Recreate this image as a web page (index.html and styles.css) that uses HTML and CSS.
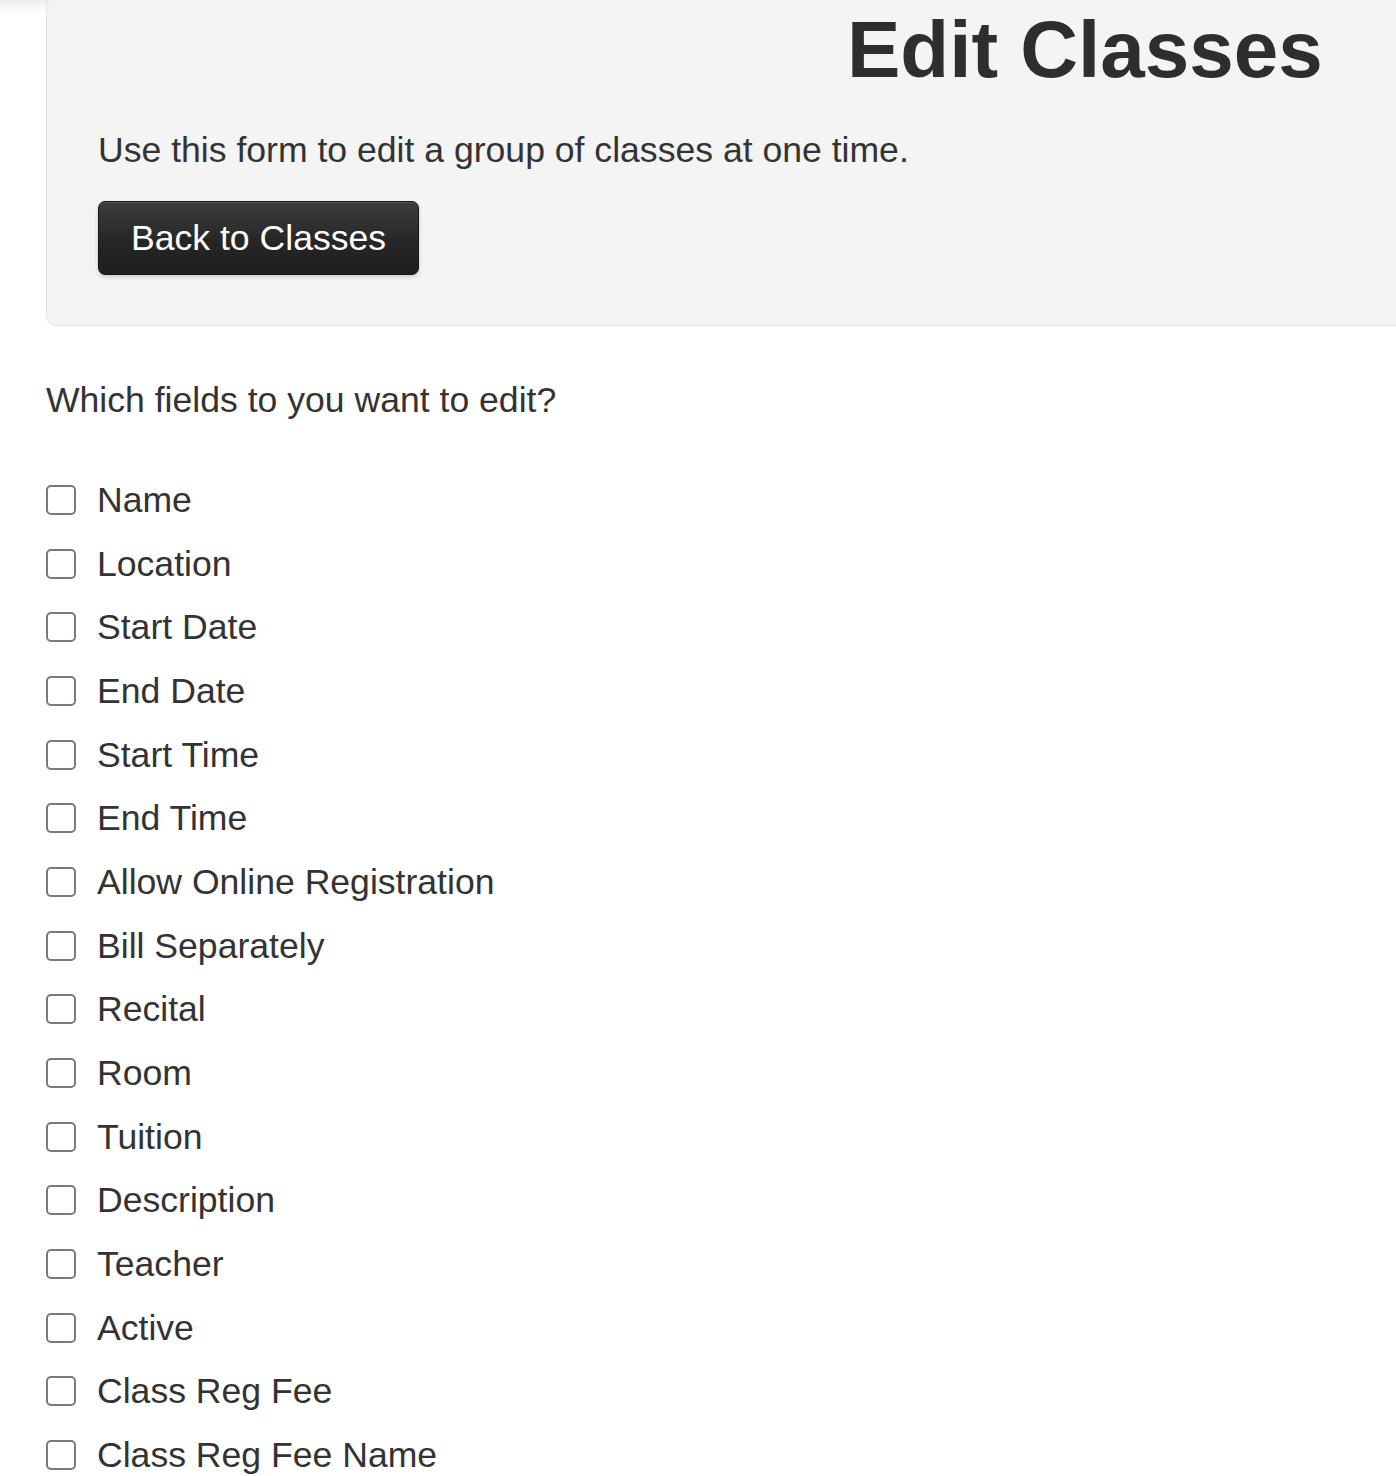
FILE: index.html
```html
<!DOCTYPE html>
<html lang="en">
<head>
<meta charset="utf-8">
<title>Edit Classes</title>
<link rel="stylesheet" href="styles.css">
</head>
<body>
<div class="page">
  <div class="jumbotron">
    <h1 class="title">Edit Classes</h1>
    <p class="lead">Use this form to edit a group of classes at one time.</p>
    <a class="btn-back" href="#">Back to Classes</a>
  </div>
  <form class="fields">
    <p class="question">Which fields to you want to edit?</p>
    <label class="check"><input type="checkbox"><span>Name</span></label>
    <label class="check"><input type="checkbox"><span>Location</span></label>
    <label class="check"><input type="checkbox"><span>Start Date</span></label>
    <label class="check"><input type="checkbox"><span>End Date</span></label>
    <label class="check"><input type="checkbox"><span>Start Time</span></label>
    <label class="check"><input type="checkbox"><span>End Time</span></label>
    <label class="check"><input type="checkbox"><span>Allow Online Registration</span></label>
    <label class="check"><input type="checkbox"><span>Bill Separately</span></label>
    <label class="check"><input type="checkbox"><span>Recital</span></label>
    <label class="check"><input type="checkbox"><span>Room</span></label>
    <label class="check"><input type="checkbox"><span>Tuition</span></label>
    <label class="check"><input type="checkbox"><span>Description</span></label>
    <label class="check"><input type="checkbox"><span>Teacher</span></label>
    <label class="check"><input type="checkbox"><span>Active</span></label>
    <label class="check"><input type="checkbox"><span>Class Reg Fee</span></label>
    <label class="check"><input type="checkbox"><span>Class Reg Fee Name</span></label>
  </form>
</div>
</body>
</html>
```
FILE: styles.css
```css
html {
  overflow-x: hidden;
  background: #fff linear-gradient(to bottom, #ececec 0, #f7f7f7 6px, #fff 16px) no-repeat;
}
body {
  margin: 0;
  font-family: "Liberation Sans", Arial, sans-serif;
  font-size: 35.6px;
  line-height: 50px;
  color: #333;
}
.page {
  padding-left: 46px;
}
.jumbotron {
  margin-top: -10px;
  margin-right: -30px;
  padding: 15px 0 50px 51px;
  background: #f4f4f4;
  border: 1px solid #e3e3e3;
  border-radius: 10px;
  box-shadow: inset 0 10px 8px -6px rgba(0,0,0,0.05);
}
.title {
  margin: 0 0 32px 749px;
  font-size: 80px;
  line-height: 87px;
  font-weight: bold;
  color: #2e2e2e;
}
.lead {
  margin: 0 0 26px 0;
}
.btn-back {
  display: inline-block;
  padding: 11px 32px;
  border: 1px solid #161616;
  border-radius: 7px;
  background: linear-gradient(to bottom, #3d3d3d 0, #262626 55%, #1e1e1e 100%);
  color: #fff;
  text-decoration: none;
  box-shadow: inset 0 1px 0 rgba(255,255,255,0.12), 0 2px 4px rgba(0,0,0,0.18);
}
.fields {
  margin: 0;
  padding-top: 49px;
}
.question {
  margin: 0 0 50px 0;
}
.check {
  display: flex;
  align-items: center;
  height: 50px;
  margin-bottom: 13.67px;
}
.check input {
  appearance: none;
  -webkit-appearance: none;
  width: 30px;
  height: 30px;
  margin: 0 21px 0 0;
  border: 2px solid #7a7a7a;
  border-radius: 5px;
  background: #fff;
  flex: none;
}
```
